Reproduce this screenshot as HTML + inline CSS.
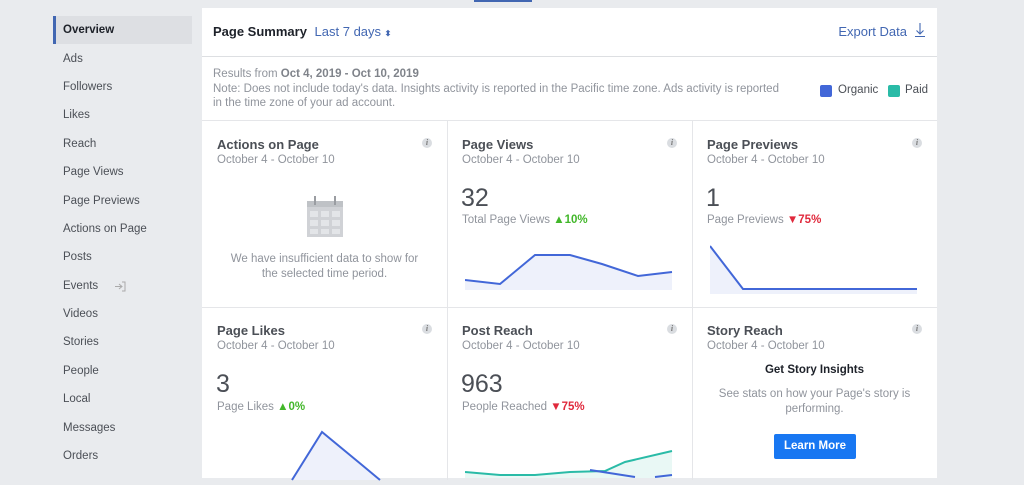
<!DOCTYPE html><html><head><style>
*{margin:0;padding:0;box-sizing:border-box}
body{width:1024px;height:472px;overflow:hidden;background:#e9ebee;font-family:"Liberation Sans",sans-serif;position:relative;color:#4b4f56}
.a{position:absolute;white-space:nowrap}
.side{font-size:11.5px;color:#4b4f56;left:63px}
.card{position:absolute;left:202px;top:8px;width:735px;height:470px;background:#fff}
.t{font-size:13px;font-weight:bold;color:#4b4f56}
.d{font-size:11.5px;color:#90949c}
.n{font-size:25px;color:#4b4f56}
.l{font-size:11.5px;color:#90949c}
.up{color:#42b72a;font-weight:bold}
.dn{color:#e0293c;font-weight:bold}
.i{width:10px;height:10px;border-radius:50%;background:#dadde1;font-size:8px;color:#777;text-align:center;line-height:10px;font-style:italic;font-family:"Liberation Serif",serif;font-weight:bold}
</style></head><body>
<div class="a" style="left:474px;top:0;width:58px;height:2px;background:#4267b2"></div>
<div class="a" style="left:53px;top:16px;width:139px;height:28px;background:#dddfe3;border-left:3px solid #4267b2"></div>
<div class="a side" style="top:24px;font-weight:bold;color:#1d2129">Overview</div>
<div class="a side" style="top:53px">Ads</div>
<div class="a side" style="top:81px">Followers</div>
<div class="a side" style="top:109px">Likes</div>
<div class="a side" style="top:138px">Reach</div>
<div class="a side" style="top:166px">Page Views</div>
<div class="a side" style="top:195px">Page Previews</div>
<div class="a side" style="top:223px">Actions on Page</div>
<div class="a side" style="top:251px">Posts</div>
<div class="a side" style="top:280px">Events</div>
<svg class="a" style="left:114px;top:281px" width="12" height="11"><path d="M1 5.5H8M5 3l3 2.5L5 8M8 1h3v9H8" fill="none" stroke="#aaa" stroke-width="1"/></svg>
<div class="a side" style="top:308px">Videos</div>
<div class="a side" style="top:336px">Stories</div>
<div class="a side" style="top:365px">People</div>
<div class="a side" style="top:393px">Local</div>
<div class="a side" style="top:422px">Messages</div>
<div class="a side" style="top:450px">Orders</div>

<div class="card">
<div class="a" style="left:11px;top:16px;font-size:13px;font-weight:bold;color:#1d2129">Page Summary <span style="font-weight:normal;color:#4267b2;margin-left:4px">Last 7 days</span> <span style="font-size:8px;color:#4267b2">⬍</span></div>
<div class="a" style="right:30px;top:16px;font-size:13px;color:#4267b2">Export Data</div>
<svg class="a" style="right:11px;top:14px" width="12" height="16"><path d="M6 1v11M2.5 8.5L6 12l3.5-3.5M1 14.5h10" fill="none" stroke="#4267b2" stroke-width="1.1"/></svg>
<div class="a" style="left:0;top:48px;width:735px;height:1px;background:#dddfe2"></div>
<div class="a" style="left:11px;top:59px;font-size:11.5px;color:#90949c;line-height:14.5px">Results from <b style="color:#7f838a">Oct 4, 2019 - Oct 10, 2019</b><br>Note: Does not include today's data. Insights activity is reported in the Pacific time zone. Ads activity is reported<br>in the time zone of your ad account.</div>
<div class="a" style="left:618px;top:77px;width:12px;height:12px;border-radius:2px;background:#4267d8"></div>
<div class="a" style="left:636px;top:76px;font-size:11.5px;color:#4b4f56">Organic</div>
<div class="a" style="left:686px;top:77px;width:12px;height:12px;border-radius:2px;background:#2abba7"></div>
<div class="a" style="left:703px;top:76px;font-size:11.5px;color:#4b4f56">Paid</div>
<div class="a" style="left:0;top:112px;width:735px;height:1px;background:#e5e6e9"></div>
<div class="a" style="left:0;top:299px;width:735px;height:1px;background:#e5e6e9"></div>
<div class="a" style="left:245px;top:112px;width:1px;height:360px;background:#e5e6e9"></div>
<div class="a" style="left:490px;top:112px;width:1px;height:360px;background:#e5e6e9"></div>

<div class="a t" style="left:15px;top:129px">Actions on Page</div>
<div class="a d" style="left:15px;top:146px">October 4 - October 10</div>
<div class="a i" style="left:220px;top:130px">i</div>
<svg class="a" style="left:105px;top:188px" width="36" height="42"><rect x="0" y="5" width="36" height="36" fill="#d0d2d6"/><rect x="0" y="5" width="36" height="6" fill="#bfc2c6"/><g fill="#e3e5e8"><rect x="3" y="15" width="8" height="6"/><rect x="14" y="15" width="8" height="6"/><rect x="25" y="15" width="8" height="6"/><rect x="3" y="24" width="8" height="6"/><rect x="14" y="24" width="8" height="6"/><rect x="25" y="24" width="8" height="6"/><rect x="3" y="33" width="8" height="5"/><rect x="14" y="33" width="8" height="5"/><rect x="25" y="33" width="8" height="5"/></g><path d="M8 0v9M28 0v9" stroke="#9a9da2" stroke-width="2"/></svg>
<div class="a" style="left:0;width:245px;top:244px;text-align:center;font-size:11.5px;color:#90949c;line-height:15px">We have insufficient data to show for<br>the selected time period.</div>

<div class="a t" style="left:260px;top:129px">Page Views</div>
<div class="a d" style="left:260px;top:146px">October 4 - October 10</div>
<div class="a i" style="left:465px;top:130px">i</div>
<div class="a n" style="left:259px;top:176px">32</div>
<div class="a l" style="left:260px;top:206px">Total Page Views <span class="up">▲10%</span></div>
<svg class="a" style="left:263px;top:232px" width="210" height="52"><path d="M0 40L35 44L70 15L105 15L137 24L173 36L207 32V50H0Z" fill="#eef1fb"/><path d="M0 40L35 44L70 15L105 15L137 24L173 36L207 32" fill="none" stroke="#4267d8" stroke-width="2"/></svg>

<div class="a t" style="left:505px;top:129px">Page Previews</div>
<div class="a d" style="left:505px;top:146px">October 4 - October 10</div>
<div class="a i" style="left:710px;top:130px">i</div>
<div class="a n" style="left:504px;top:176px">1</div>
<div class="a l" style="left:505px;top:206px">Page Previews <span class="dn">▼75%</span></div>
<svg class="a" style="left:508px;top:236px" width="210" height="50"><path d="M0 2L33 45L207 45V50H0Z" fill="#eef1fb"/><path d="M0 2L33 45L207 45" fill="none" stroke="#4267d8" stroke-width="2"/></svg>

<div class="a t" style="left:15px;top:315px">Page Likes</div>
<div class="a d" style="left:15px;top:332px">October 4 - October 10</div>
<div class="a i" style="left:220px;top:316px">i</div>
<div class="a n" style="left:14px;top:362px">3</div>
<div class="a l" style="left:15px;top:393px">Page Likes <span class="up">▲0%</span></div>
<svg class="a" style="left:60px;top:417px" width="150" height="60"><path d="M30 55L60 7L100 40L118 55Z" fill="#eef1fb"/><path d="M30 55L60 7L100 40L118 55" fill="none" stroke="#4267d8" stroke-width="2"/></svg>

<div class="a t" style="left:260px;top:315px">Post Reach</div>
<div class="a d" style="left:260px;top:332px">October 4 - October 10</div>
<div class="a i" style="left:465px;top:316px">i</div>
<div class="a n" style="left:259px;top:362px">963</div>
<div class="a l" style="left:260px;top:393px">People Reached <span class="dn">▼75%</span></div>
<svg class="a" style="left:263px;top:438px" width="210" height="32"><path d="M0 26L35 29L70 29L105 26L140 25L160 16L207 5V32H0Z" fill="#e9f8f5"/><path d="M0 26L35 29L70 29L105 26L140 25L160 16L207 5" fill="none" stroke="#2abba7" stroke-width="2"/><path d="M125 24L170 31M190 31L207 29" fill="none" stroke="#4267d8" stroke-width="2"/></svg>

<div class="a t" style="left:505px;top:315px">Story Reach</div>
<div class="a d" style="left:505px;top:332px">October 4 - October 10</div>
<div class="a i" style="left:710px;top:316px">i</div>
<div class="a" style="left:490px;width:245px;top:356px;text-align:center;font-size:11.5px;font-weight:bold;color:#1d2129">Get Story Insights</div>
<div class="a" style="left:490px;width:245px;top:379px;text-align:center;font-size:11.5px;color:#90949c;line-height:15px">See stats on how your Page's story is<br>performing.</div>
<div class="a" style="left:572px;top:426px;width:82px;height:25px;background:#1877f2;border-radius:2px;color:#fff;font-size:11.5px;font-weight:bold;text-align:center;line-height:25px">Learn More</div>
</div>
</body></html>
